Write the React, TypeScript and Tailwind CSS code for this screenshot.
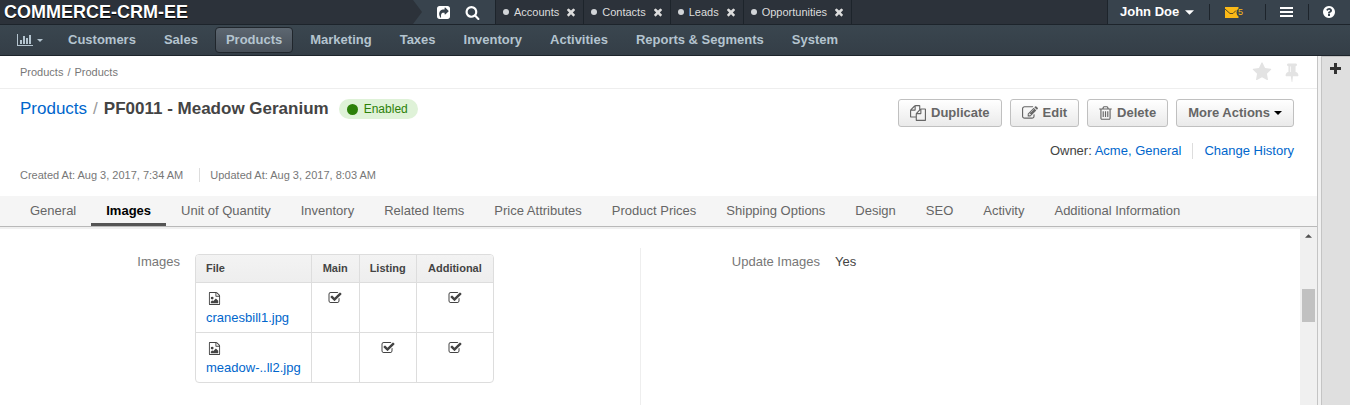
import React from "react";

type IconProps = { d: string; box?: string; className?: string };

const Icon = ({ d, box = "0 0 1792 1792", className = "" }: IconProps) => (
  <svg viewBox={box} className={`shrink-0 fill-current ${className}`} aria-hidden="true">
    <path d={d} />
  </svg>
);

const CHART =
  "M640 896v512h-256v-512h256zm384-512v1024h-256v-1024h256zm1024 1152v128h-2048v-1536h128v1408h1920zm-640-896v768h-256v-768h256zm384-384v1152h-256v-1152h256z";
const SHARE =
  "M1005 1117l352-352q19-19 19-45t-19-45l-352-352q-30-31-69-14-40 17-40 59v160q-119 0-216 19.5t-162.5 51-114 79-76.5 95.5-44.5 109-21.5 111.5-5 110.5q0 181 167 404 11 12 25 12 7 0 13-3 22-9 19-33-44-354 62-473 46-52 130-75.5t224-23.5v160q0 42 40 59 12 5 24 5 26 0 45-19zm531-701v960q0 119-84.5 203.5t-203.5 84.5h-960q-119 0-203.5-84.5t-84.5-203.5v-960q0-119 84.5-203.5t203.5-84.5h960q119 0 203.5 84.5t84.5 203.5z";
const SEARCH =
  "M1216 832q0-185-131.5-316.5t-316.5-131.5-316.5 131.5-131.5 316.5 131.5 316.5 316.5 131.5 316.5-131.5 131.5-316.5zm512 832q0 52-38 90t-90 38q-54 0-90-38l-343-342q-179 124-399 124-143 0-273.5-55.5t-225-150-150-225-55.5-273.5 55.5-273.5 150-225 225-150 273.5-55.5 273.5 55.5 225 150 150 225 55.5 273.5q0 220-124 399l343 343q37 37 37 90z";
const TIMES =
  "M1490 1322q0 40-28 68l-136 136q-28 28-68 28t-68-28l-294-294-294 294q-28 28-68 28t-68-28l-136-136q-28-28-28-68t28-68l294-294-294-294q-28-28-28-68t28-68l136-136q28-28 68-28t68 28l294 294 294-294q28-28 68-28t68 28l136 136q28 28 28 68t-28 68l-294 294 294 294q28 28 28 68z";
const HELP =
  "M1024 1376v-192q0-14-9-23t-23-9h-192q-14 0-23 9t-9 23v192q0 14 9 23t23 9h192q14 0 23-9t9-23zm256-672q0-88-55.5-163t-138.5-116-170-41q-243 0-371 213-15 24 8 42l132 100q7 6 19 6 16 0 25-12 53-68 86-92 34-24 86-24 48 0 85.5 26t37.5 59q0 38-20 61t-68 45q-63 28-115.5 86.5t-52.5 125.5v36q0 14 9 23t23 9h192q14 0 23-9t9-23q0-19 21.5-49.5t54.5-49.5q32-18 49-28.5t46-35 44.5-48 28-60.5 12.5-81zm384 192q0 209-103 385.5t-279.5 279.5-385.5 103-385.5-103-279.5-279.5-103-385.5 103-385.5 279.5-279.5 385.5-103 385.5 103 279.5 279.5 103 385.5z";
const STAR =
  "M1728 647q0 22-26 48l-363 354 86 500q1 7 1 20 0 21-10.5 35.5t-30.5 14.5q-19 0-40-12l-449-236-449 236q-22 12-40 12-21 0-31.5-14.5t-10.5-35.5q0-6 2-20l86-500-364-354q-25-27-25-48 0-37 56-46l502-73 225-455q19-41 49-41t49 41l225 455 502 73q56 9 56 46z";
const PIN =
  "M800 864v-448q0-14-9-23t-23-9-23 9-9 23v448q0 14 9 23t23 9 23-9 9-23zm672 352q0 26-19 45t-45 19h-429l-51 483q-2 12-10.5 20.5t-20.5 8.5h-1q-27 0-32-27l-76-485h-404q-26 0-45-19t-19-45q0-123 78.5-221.5t177.5-98.5v-512q-52 0-90-38t-38-90 38-90 90-38h640q52 0 90 38t38 90-38 90-90 38v512q99 0 177.5 98.5t78.5 221.5z";
const COPY =
  "M1696 384q40 0 68 28t28 68v1216q0 40-28 68t-68 28h-960q-40 0-68-28t-28-68v-288h-544q-40 0-68-28t-28-68v-672q0-40 20-88t48-76l408-408q28-28 76-48t88-20h416q40 0 68 28t28 68v328q68-40 128-40h416zm-544 213l-299 299h299v-299zm-640-384l-299 299h299v-299zm196 647l316-316v-416h-384v416q0 40-28 68t-68 28h-416v640h512v-256q0-40 20-88t48-76zm956 804v-1152h-384v416q0 40-28 68t-68 28h-416v640h896z";
const EDIT =
  "M888 1184l116-116-152-152-116 116v56h96v96h56zm440-720q-16-16-33 1l-350 350q-17 17-1 33t33-1l350-350q17-17 1-33zm80 594v190q0 119-84.5 203.5t-203.5 84.5h-832q-119 0-203.5-84.5t-84.5-203.5v-832q0-119 84.5-203.5t203.5-84.5h832q63 0 117 25 15 7 18 23 3 17-9 29l-49 49q-14 14-32 8-23-6-45-6h-832q-66 0-113 47t-47 113v832q0 66 47 113t113 47h832q66 0 113-47t47-113v-126q0-13 9-22l64-64q15-15 35-7t20 29zm-96-738l288 288-672 672h-288v-288zm444 132l-92 92-288-288 92-92q28-28 68-28t68 28l152 152q28 28 28 68t-28 68z";
const TRASH =
  "M704 736v576q0 14-9 23t-23 9h-64q-14 0-23-9t-9-23v-576q0-14 9-23t23-9h64q14 0 23 9t9 23zm256 0v576q0 14-9 23t-23 9h-64q-14 0-23-9t-9-23v-576q0-14 9-23t23-9h64q14 0 23 9t9 23zm256 0v576q0 14-9 23t-23 9h-64q-14 0-23-9t-9-23v-576q0-14 9-23t23-9h64q14 0 23 9t9 23zm128 724v-948h-896v948q0 22 7 40.5t14.5 27 10.5 8.5h832q3 0 10.5-8.5t14.5-27 7-40.5zm-672-1076h448l-48-117q-7-9-17-11h-317q-10 2-17 11zm928 32v64q0 14-9 23t-23 9h-96v948q0 83-47 143.5t-113 60.5h-832q-66 0-113-58.5t-47-141.5v-952h-96q-14 0-23-9t-9-23v-64q0-14 9-23t23-9h309l70-167q15-37 54-63t79-26h320q40 0 79 26t54 63l70 167h309q14 0 23 9t9 23z";
const IMAGE_FILE =
  "M1596 380q28 28 48 76t20 88v1152q0 40-28 68t-68 28h-1344q-40 0-68-28t-28-68v-1600q0-40 28-68t68-28h896q40 0 88 20t76 48zm-444-244v376h376q-10-29-22-41l-313-313q-12-12-41-22zm384 1528v-1024h-416q-40 0-68-28t-28-68v-416h-768v1536h1280zm-128-448v320h-1024v-192l192-192 128 128 384-384zm-832-192q-80 0-136-56t-56-136 56-136 136-56 136 56 56 136-56 136-136 56z";
const CHECK =
  "M1472 930v318q0 119-84.5 203.5t-203.5 84.5h-832q-119 0-203.5-84.5t-84.5-203.5v-832q0-119 84.5-203.5t203.5-84.5h832q63 0 117 25 15 7 18 23 3 17-9 29l-49 49q-10 10-23 10-3 0-9-2-23-6-45-6h-832q-66 0-113 47t-47 113v832q0 66 47 113t113 47h832q66 0 113-47t47-113v-254q0-13 9-22l64-64q10-10 23-10 6 0 12 3 20 8 20 29zm231-489l-814 814q-24 24-57 24t-57-24l-430-430q-24-24-24-57t24-57l110-110q24-24 57-24t57 24l263 263 647-647q24-24 57-24t57 24l110 110q24 24 24 57t-24 57z";

const Caret = ({ className }: { className: string }) => (
  <svg viewBox="0 0 8 4" className={`shrink-0 fill-current ${className}`} aria-hidden="true">
    <path d="M0 0h8L4 4z" />
  </svg>
);

const pinned = ["Accounts", "Contacts", "Leads", "Opportunities"];
const menu = [
  "Customers",
  "Sales",
  "Products",
  "Marketing",
  "Taxes",
  "Inventory",
  "Activities",
  "Reports & Segments",
  "System",
];
const sections = [
  "General",
  "Images",
  "Unit of Quantity",
  "Inventory",
  "Related Items",
  "Price Attributes",
  "Product Prices",
  "Shipping Options",
  "Design",
  "SEO",
  "Activity",
  "Additional Information",
];
const columns = [
  { name: "Main", width: "w-12" },
  { name: "Listing", width: "w-[57px]" },
  { name: "Additional", width: "w-[77px]" },
];
const files = [
  { name: "cranesbill1.jpg", roles: ["Main", "Additional"] },
  { name: "meadow-..ll2.jpg", roles: ["Listing", "Additional"] },
];

function TopBar() {
  return (
    <div className="flex h-6 bg-[#2c323a] text-white">
      <div className="flex w-[495px] shrink-0 bg-[#38434d]">
        <a
          href="#"
          className="flex w-[422px] items-center bg-[#2c323a] pl-1 text-lg leading-6 font-bold [clip-path:polygon(0_0,413px_0,100%_50%,413px_100%,0_100%)] [text-shadow:0_1px_1px_#000000]"
        >
          COMMERCE-CRM-EE
        </a>
        <button aria-label="Shortcuts" className="ml-[15px]">
          <Icon d={SHARE} box="0 128 1536 1536" className="size-[13px]" />
        </button>
        <button aria-label="Search" className="ml-[15px]">
          <Icon d={SEARCH} className="size-[15px]" />
        </button>
      </div>
      <ul className="flex flex-1 border-l border-[#1d242b] text-[11px] text-[#dddddd]">
        {pinned.map((name) => (
          <li key={name} className="flex items-center border-r border-[#1d242b] pr-[6px] pl-[7px]">
            <span className="mr-[5px] size-[6px] rounded-full bg-[#d2d5d8]" />
            <a href="#">{name}</a>
            <button aria-label={`Close ${name}`} className="ml-[6px]">
              <Icon d={TIMES} className="size-3" />
            </button>
          </li>
        ))}
      </ul>
      <div className="flex w-[243px] shrink-0 items-center border-l border-[#1d242b] bg-[#38434d]">
        <button className="flex w-[101px] items-center pl-3 text-[13px] font-bold">
          John Doe
          <Caret className="ml-[6px] h-[5px] w-[9px]" />
        </button>
        <button
          aria-label="5 unread emails"
          className="flex h-4 w-14 items-center border-l border-[#1d242b] pl-[15px] text-[#fbb917]"
        >
          <svg viewBox="0 0 14 11" className="h-[11px] w-[14px]" aria-hidden="true">
            <path d="M0 0h13.500v1.500a5 5 0 0 0 0 8V11H0z" fill="currentColor" />
            <path d="M0 2l5 4.500h3l3-3" fill="none" stroke="#5a4b1f" />
          </svg>
          <span className="-ml-px text-[9px] leading-[11px]">5</span>
        </button>
        <button
          aria-label="Menu"
          className="flex h-4 w-[43px] items-center border-l border-[#1d242b] pl-[14px]"
        >
          <svg viewBox="0 0 13 10" className="h-[10px] w-[13px] fill-current" aria-hidden="true">
            <path d="M0 0h13v2H0zM0 4h13v2H0zM0 8h13v2H0z" />
          </svg>
        </button>
        <button aria-label="Help" className="flex h-4 items-center border-l border-[#1d242b] pl-[14px]">
          <Icon d={HELP} box="128 128 1536 1536" className="size-3" />
        </button>
      </div>
    </div>
  );
}

function MainMenu() {
  return (
    <nav className="flex h-8 items-center gap-[6px] border-y border-[#1d242b] bg-linear-to-b from-[#3a464f] to-[#343e47] pl-[17px] text-[13px] font-bold text-[#b4c4cf]">
      <button aria-label="Dashboards" className="flex w-[34px] items-center">
        <Icon d={CHART} box="0 0 2048 1792" className="h-[14px] w-4" />
        <Caret className="ml-1 h-[3px] w-[6px]" />
      </button>
      {menu.map((name) => (
        <a
          key={name}
          href="#"
          className={
            name === "Products"
              ? "rounded-sm border border-[#20262c] bg-linear-to-b from-[#5d6771] to-[#474f58] px-[10px] leading-6"
              : "border border-transparent px-[10px] leading-6"
          }
        >
          {name}
        </a>
      ))}
    </nav>
  );
}

type ActionButtonProps = {
  icon?: string;
  box?: string;
  iconSize?: string;
  children: React.ReactNode;
};

function ActionButton({ icon, box, iconSize = "size-4", children }: ActionButtonProps) {
  return (
    <button className="flex h-7 items-center rounded-[3px] border border-[#c0c0c0] bg-linear-to-b from-white to-[#eaeaea] px-[11px] text-[13px] font-bold text-[#666666]">
      {icon && <Icon d={icon} box={box} className={`mr-[5px] ${iconSize}`} />}
      {children}
    </button>
  );
}

function PageHeader() {
  return (
    <header>
      <div className="flex h-[33px] items-center justify-between border-b border-[#eeeeee] pr-[15px] pl-5 text-[11px] text-[#777777]">
        <nav className="flex gap-1">
          <a href="#">Products</a>
          <span>/</span>
          <a href="#">Products</a>
        </nav>
        <div className="flex items-center gap-[10px] text-[#e3e3e3]">
          <button aria-label="Add to favorites">
            <Icon d={STAR} className="size-5" />
          </button>
          <button aria-label="Pin page">
            <Icon d={PIN} className="size-5" />
          </button>
        </div>
      </div>
      <div className="flex justify-between pt-[10px] pr-[23px] pl-5">
        <div className="flex h-5 items-center text-[17px]">
          <a href="#" className="text-[#0066cc]">
            Products
          </a>
          <span className="mx-[6px] text-[#999999]">/</span>
          <h1 className="font-bold text-[#444444]">PF0011 - Meadow Geranium</h1>
          <span className="ml-[10px] flex h-5 items-center rounded-full bg-[#dff2d8] pr-[10px] pl-2 text-xs text-[#2c8009]">
            <span className="mr-[6px] size-[11px] rounded-full bg-[#2c8009]" />
            Enabled
          </span>
        </div>
        <div className="flex gap-2">
          <ActionButton icon={COPY}>Duplicate</ActionButton>
          <ActionButton icon={EDIT}>Edit</ActionButton>
          <ActionButton icon={TRASH} box="192 0 1408 1792" iconSize="h-4 w-[13px]">
            Delete
          </ActionButton>
          <ActionButton>
            More Actions
            <Caret className="ml-1 h-1 w-2 text-black" />
          </ActionButton>
        </div>
      </div>
      <div className="flex justify-end pt-4 pr-[23px] text-[13px] leading-4 text-[#444444]">
        <span>
          Owner:{" "}
          <a href="#" className="text-[#0066cc]">
            Acme, General
          </a>
        </span>
        <a href="#" className="ml-[11px] border-l border-[#dddddd] pl-[11px] text-[#0066cc]">
          Change History
        </a>
      </div>
      <div className="flex pt-[9px] pb-[14px] pl-5 text-[11px] leading-[14px] text-[#777777]">
        <span>Created At: Aug 3, 2017, 7:34 AM</span>
        <span className="ml-4 border-l border-[#dddddd] pl-[10px]">
          Updated At: Aug 3, 2017, 8:03 AM
        </span>
      </div>
    </header>
  );
}

function FilesTable() {
  return (
    <div className="overflow-hidden rounded border border-[#dddddd]">
      <table className="border-collapse text-[13px]">
        <thead>
          <tr className="h-[27px] bg-linear-to-b from-[#f3f3f3] to-[#eeeeee] text-[11px] text-[#444444]">
            <th className="px-[10px] text-left">File</th>
            {columns.map(({ name, width }) => (
              <th key={name} className={`border-l border-[#dddddd] ${width}`}>
                {name}
              </th>
            ))}
          </tr>
        </thead>
        <tbody>
          {files.map((file) => (
            <tr key={file.name} className="h-[50px] border-t border-[#dddddd] align-top">
              <td className="px-[10px] pt-2">
                <Icon d={IMAGE_FILE} className="mt-[1px] ml-[2px] size-[13px]" />
                <a href="#" className="mt-[3px] block leading-5 text-[#0066cc]">
                  {file.name}
                </a>
              </td>
              {columns.map(({ name }) => (
                <td key={name} className="border-l border-[#dddddd] pt-2">
                  {file.roles.includes(name) && (
                    <label className="mx-auto grid size-[14px] place-items-center">
                      <input
                        type="checkbox"
                        checked
                        readOnly
                        aria-label={`${file.name}: ${name}`}
                        className="col-start-1 row-start-1 size-3 appearance-none"
                      />
                      <Icon d={CHECK} className="col-start-1 row-start-1 size-[14px]" />
                    </label>
                  )}
                </td>
              ))}
            </tr>
          ))}
        </tbody>
      </table>
    </div>
  );
}

export default function App() {
  return (
    <div className="flex min-h-screen flex-col bg-white font-['Liberation_Sans',Arial,sans-serif] text-[#444444]">
      <TopBar />
      <MainMenu />
      <div className="flex flex-1">
        <main className="flex min-w-0 flex-1 flex-col">
          <PageHeader />
          <nav className="flex h-[31px] border-b border-[#b9b9b9] bg-[#f5f5f5] pl-[15px] text-[13px] leading-[30px] text-[#666666]">
            {sections.map((name) => (
              <a
                key={name}
                href="#"
                className={
                  name === "Images"
                    ? "border-b-3 border-[#555555] px-[15px] font-bold text-black"
                    : "px-[15px]"
                }
              >
                {name}
              </a>
            ))}
          </nav>
          <div className="flex flex-1 border-t-2 border-[#f0f0f0]">
            <div className="grid flex-1 grid-cols-2 pt-[19px]">
              <section className="flex items-start pt-[6px]">
                <h2 className="mr-[15px] w-[180px] text-right text-[13px] leading-4 text-[#777777]">
                  Images
                </h2>
                <FilesTable />
              </section>
              <dl className="-ml-[10px] flex border-l border-[#eeeeee] pt-[6px] text-[13px] leading-4">
                <dt className="w-[179px] text-right text-[#777777]">Update Images</dt>
                <dd className="ml-[15px]">Yes</dd>
              </dl>
            </div>
            <div className="flex w-[17px] flex-col items-center bg-[#f0f0f0] pt-[5px]">
              <Caret className="h-1 w-[7px] rotate-180 text-[#505050]" />
              <div className="mt-[51px] h-[33px] w-[13px] bg-[#c1c1c1]" />
            </div>
          </div>
        </main>
        <aside className="flex w-[33px] shrink-0 border-l border-[#c4c4c4] bg-[#f1f1f1] pl-[3px]">
          <div className="flex-1 border-t border-l border-[#c4c4c4] bg-[#dfdfdf] pt-[6px] pl-2">
            <button aria-label="Add widget" className="block">
              <svg viewBox="0 0 11 11" className="size-[11px] fill-[#333333]" aria-hidden="true">
                <path d="M4 0h3v4h4v3H7v4H4V7H0V4h4z" />
              </svg>
            </button>
          </div>
        </aside>
      </div>
    </div>
  );
}
